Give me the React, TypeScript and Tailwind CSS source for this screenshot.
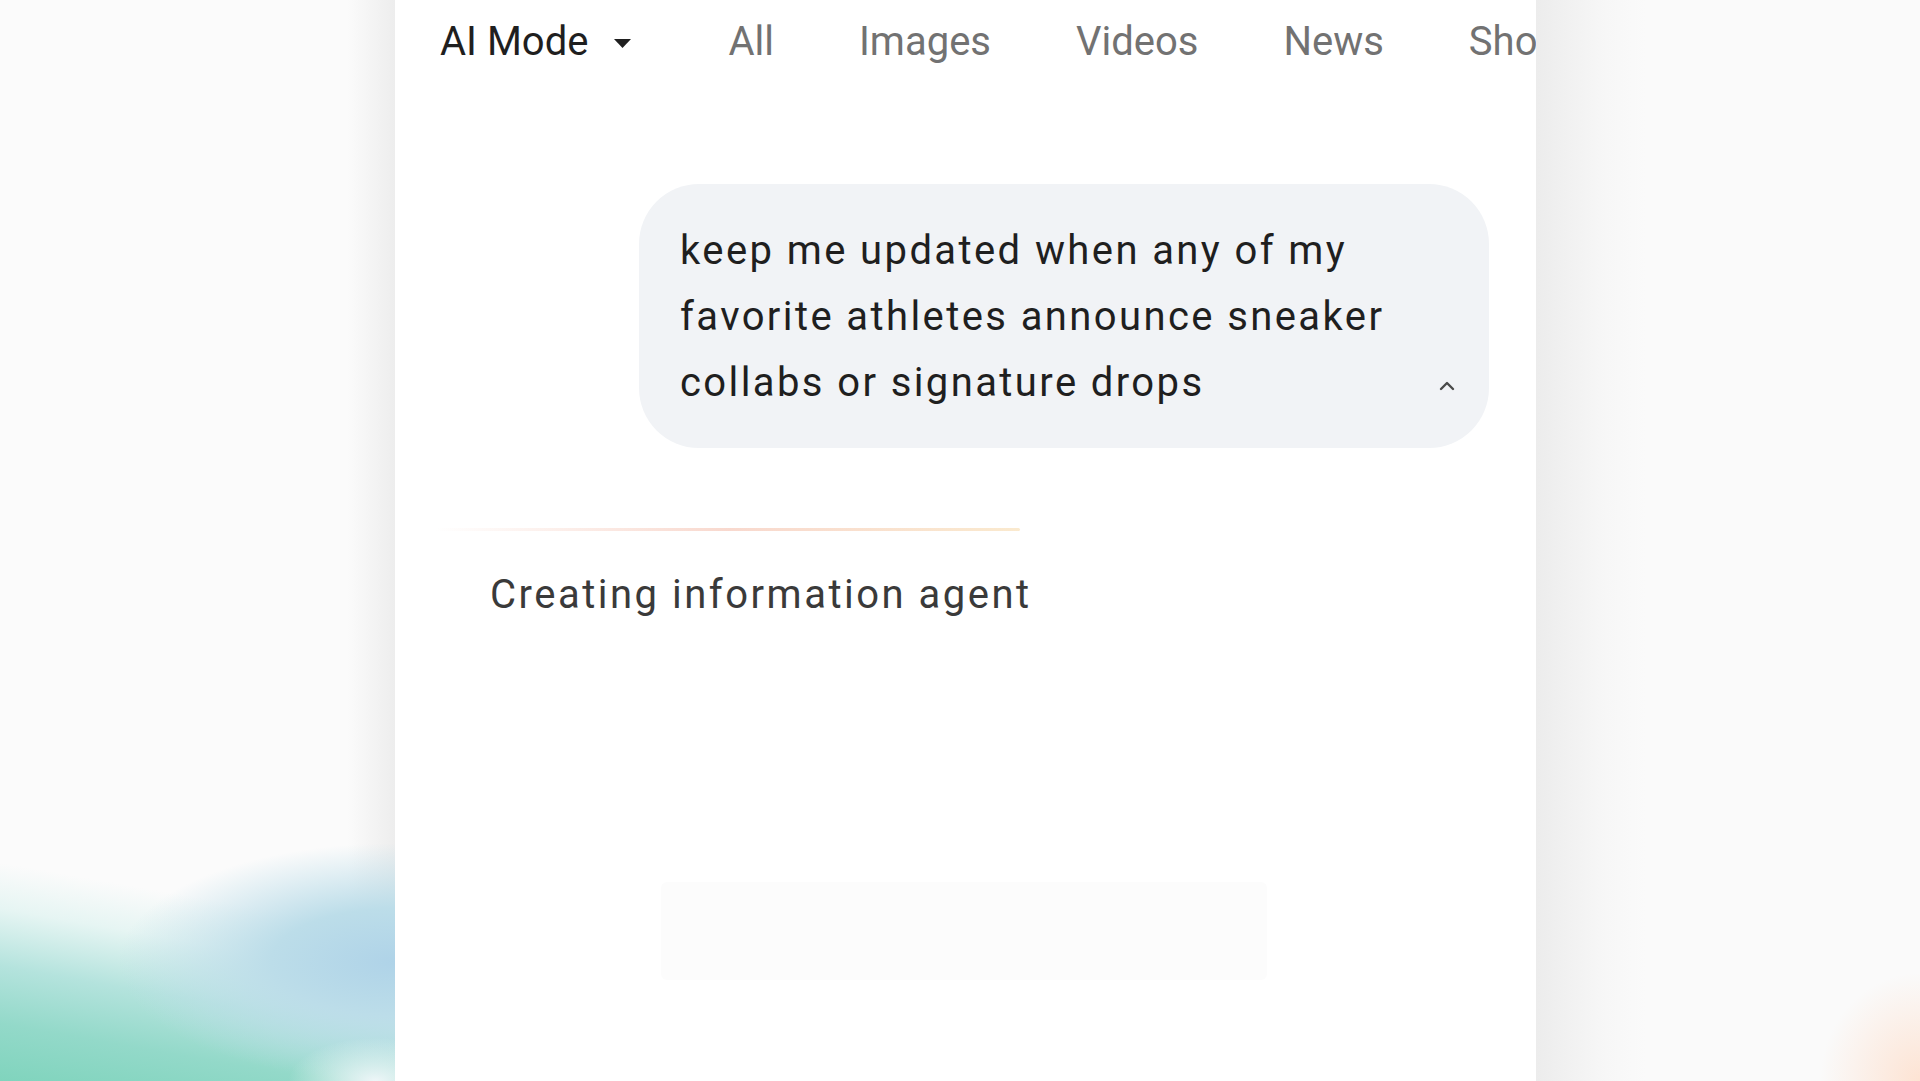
import { ChevronUp } from "lucide-react";

const tabs = ["All", "Images", "Videos", "News", "Shopping"];

const lines = [
  "keep me updated when any of my",
  "favorite athletes announce sneaker",
  "collabs or signature drops",
];

export default function App() {
  return (
    <div className="flex h-[1081px] w-full overflow-hidden font-['Roboto','Noto_Sans',sans-serif]">
      {/* --------------------- left backdrop --------------------- */}
      <div className="w-[395px] shrink-0 bg-[#fbfbfb] bg-[radial-gradient(ellipse_22%_4%_at_95%_100%,#eef6f8_0%,transparent_100%),radial-gradient(ellipse_70%_11%_at_100%_89%,#afd3e8_0%,#bcdde9_45%,transparent_100%),linear-gradient(190deg,transparent_81%,#e6f5f3_85%,#b4e3dd_90%,#93d9c9_95%,#80d4bd_100%),linear-gradient(to_right,transparent_88%,#ededed_100%)]" />

      {/* --------------------- main panel --------------------- */}
      <div className="flex w-[1141px] shrink-0 flex-col overflow-hidden bg-white">
        {/* tabs */}
        <div className="flex h-[84px] shrink-0 items-center gap-[85px] whitespace-nowrap pl-[45px] text-[40px] text-[#727272]">
          <div className="mr-[12px] flex shrink-0 items-center gap-[26px] text-[#1f1f1f]">
            <span>AI Mode</span>
            <svg width="17" height="9" viewBox="0 0 17 9" className="mt-[2px]">
              <polygon points="0,0 17,0 8.5,9" fill="#1f1f1f" />
            </svg>
          </div>
          {tabs.map((t) => (
            <span key={t} className="shrink-0">{t}</span>
          ))}
        </div>

        {/* user prompt bubble */}
        <div className="mr-[47px] mt-[100px] flex w-[850px] items-end justify-between self-end rounded-[60px] bg-[#f1f3f6] pb-[32px] pl-[41px] pr-[30px] pt-[34px]">
          <p className="text-[40px] leading-[66px] tracking-[2.4px] text-[#1f1f1f]">
            {lines.map((l) => (
              <span key={l} className="block whitespace-nowrap">{l}</span>
            ))}
          </p>
          <ChevronUp className="mb-[18px] h-[24px] w-[24px] text-[#4a4a4a]" strokeWidth={2.4} />
        </div>

        {/* progress shimmer */}
        <div className="ml-[40px] mt-[80px] h-[3px] w-[585px] rounded-full bg-gradient-to-r from-transparent via-[#f7cfc2] to-[#f9e4c2] opacity-80" />

        <p className="ml-[95px] mt-[40px] text-[40px] leading-[48px] tracking-[2.5px] text-[#3a3a3a]">Creating information agent</p>

        {/* faint placeholder card */}
        <div className="ml-[266px] mt-[263px] h-[98px] w-[606px] rounded-[6px] bg-[#fcfcfc]" />
      </div>

      {/* --------------------- right backdrop --------------------- */}
      <div className="flex-1 bg-[#fafafa] bg-[radial-gradient(ellipse_26%_10%_at_100%_100%,#fde3d3_0%,transparent_100%),linear-gradient(to_right,#ececec_0px,#f1f1f1_32px,#f7f7f7_70px,#fafafa_110px)]" />
    </div>
  );
}
